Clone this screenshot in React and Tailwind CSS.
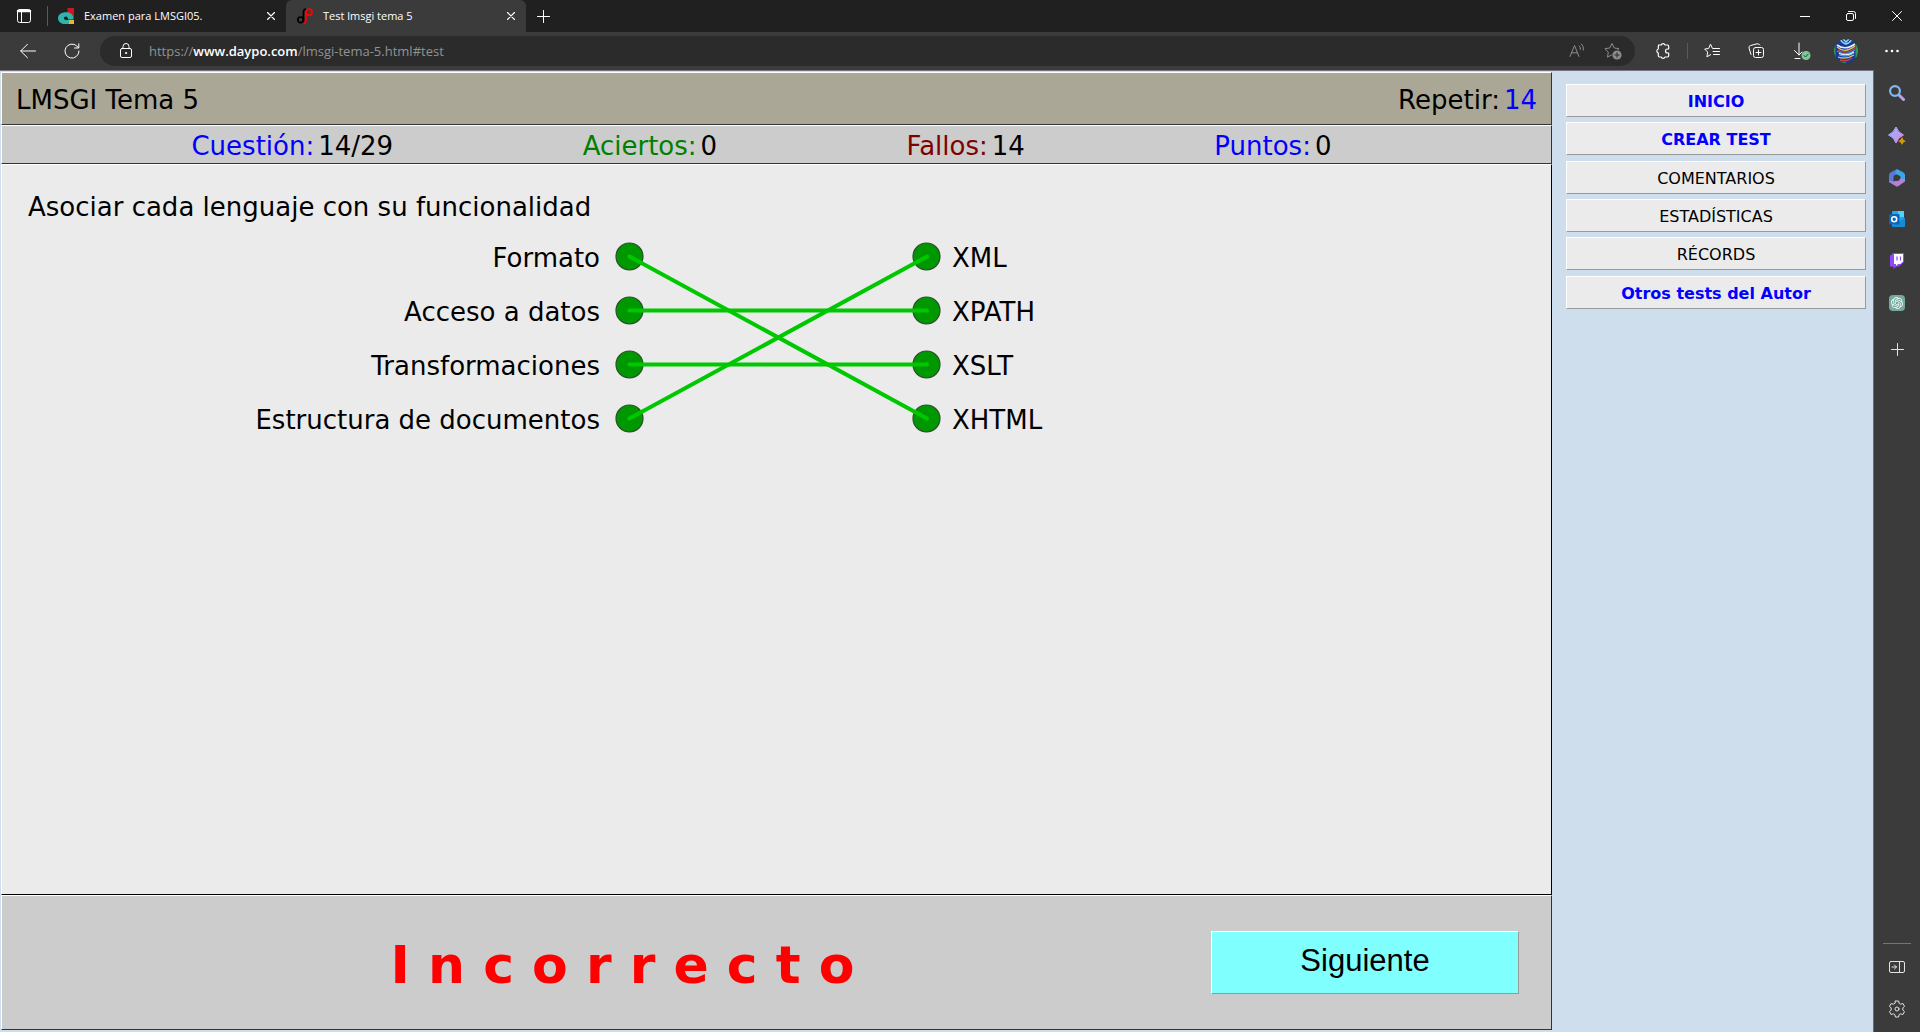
import { SiOpenai } from "react-icons/si";

const stroke = {
  fill: "none",
  stroke: "currentColor",
  strokeLinecap: "round",
  strokeLinejoin: "round",
};

function Icon({ children, className = "size-4", box = 16, ...rest }) {
  return (
    <svg className={className} viewBox={`0 0 ${box} ${box}`} aria-hidden="true" {...stroke} {...rest}>
      {children}
    </svg>
  );
}

function CloseMark() {
  return (
    <Icon className="size-2" box={8} strokeWidth="1.2">
      <path d="M0.5 0.5l7 7M7.5 0.5l-7 7" />
    </Icon>
  );
}

function TabStrip() {
  return (
    <header className="flex h-8 items-center bg-[#202020] text-white">
      <button aria-label="Menú de pestañas" className="flex h-5 w-12 items-center justify-center border-r border-[#5a5a5a]">
        <Icon>
          <rect x="1.5" y="1.5" width="13" height="13" rx="2" />
          <path d="M2 3h12" strokeWidth="2.5" />
          <path d="M5.5 4v10" />
        </Icon>
      </button>
      <div className="flex w-[238px] items-center gap-2.5 pl-2.5 pr-[11px]">
        <svg className="size-4 shrink-0" viewBox="0 0 16 16" aria-hidden="true">
          <path d="M9.500 0H16V10H13V6H9.500z" fill="#c8191e" />
          <path d="M11 12h5v4h-5z" fill="#f3b229" />
          <path d="M10.500 4.500C4 3.500 0 6.500 0 10.200 0 14 3.500 16 7 16h4v-4H8c-2.500 0-3-3.500 0-3.500 1.500 0 2 1.500 2 3h5.500C15.500 7.500 13.500 5 10.500 4.500z" fill="#30b3ad" />
        </svg>
        <span className="grow text-[11px]">Examen para LMSGI05.</span>
        <button aria-label="Cerrar pestaña"><CloseMark /></button>
      </div>
      <div className="flex h-8 w-60 items-center gap-2.5 rounded-t-md bg-[#3b3b3b] pl-[11px] pr-[11px]">
        <svg className="size-4 shrink-0" viewBox="0 0 16 16" fill="none" aria-hidden="true">
          <circle cx="3.600" cy="11.800" r="2.800" stroke="#000" strokeWidth="1.700" />
          <path d="M6.500 14.500V4.500Q6.500 1 9 1" stroke="#000" strokeWidth="1.700" />
          <circle cx="12" cy="4.200" r="3" stroke="#f00" strokeWidth="1.800" />
          <path d="M8.900 3.500V11.500Q8.900 15 6.500 15.200" stroke="#f00" strokeWidth="1.900" />
        </svg>
        <span className="grow text-[11px]">Test lmsgi tema 5</span>
        <button aria-label="Cerrar pestaña"><CloseMark /></button>
      </div>
      <button aria-label="Nueva pestaña" className="flex w-[34px] justify-center">
        <Icon className="size-[13px]" box={13}><path d="M6.500 0.500v12M0.500 6.500h12" /></Icon>
      </button>
      <div className="ml-auto flex">
        <button aria-label="Minimizar" className="flex w-[46px] items-center justify-center">
          <Icon className="size-2.5" box={10}><path d="M0 5.500h10" /></Icon>
        </button>
        <button aria-label="Restaurar" className="flex w-[46px] items-center justify-center">
          <Icon className="size-2.5" box={10}>
            <rect x="0.500" y="2.500" width="7" height="7" rx="1.500" />
            <path d="M2.500 0.500H7.500Q9.500 0.500 9.500 2.500V7.500" />
          </Icon>
        </button>
        <button aria-label="Cerrar" className="flex w-[46px] items-center justify-center">
          <Icon className="size-2.5" box={10}><path d="M0.500 0.500l9 9M9.500 0.500l-9 9" /></Icon>
        </button>
      </div>
    </header>
  );
}

function Toolbar() {
  return (
    <nav className="flex h-[38px] items-center bg-[#3b3b3b] pr-1.5 text-white">
      <button aria-label="Atrás" className="ml-1.5 flex w-11 justify-center">
        <Icon><path d="M15.500 8H0.800M7.500 1.200L0.700 8l6.800 6.800" /></Icon>
      </button>
      <button aria-label="Actualizar" className="flex w-11 justify-center">
        <Icon><path d="M15 8A7 7 0 1 1 12.800 3L14.500 4.700M14.800 0.800V5H10.500" /></Icon>
      </button>
      <div className="ml-1.5 flex h-[30px] grow items-center rounded-full bg-[#2b2b2b] pl-[18px] pr-1">
        <button aria-label="Información del sitio">
          <Icon>
            <rect x="2.500" y="5.500" width="11" height="9" rx="1.500" />
            <path d="M5 5.500V3.500a3 3 0 0 1 6 0v2" />
            <circle cx="8" cy="10" r="0.600" fill="currentColor" />
          </Icon>
        </button>
        <a href="https://www.daypo.com/lmsgi-tema-5.html#test" className="ml-[15px] grow pt-0.5 text-[13px] text-[#929292]">
          https://<span className="font-semibold text-white">www.daypo.com</span>/lmsgi-tema-5.html#test
        </a>
        <button aria-label="Leer en voz alta" className="flex w-9 justify-center text-[#8c8c8c]">
          <Icon>
            <path d="M1 13.500L5.500 2.500 10 13.500M2.600 9.800h5.800M10.500 3q1.200 1.500 0.900 3.500M12.500 1q2.500 2.500 2 6" />
          </Icon>
        </button>
        <button aria-label="Agregar a favoritos" className="flex w-9 justify-center text-[#8c8c8c]">
          <Icon className="size-[18px]" box={18}>
            <path d="M7.500 13l-4 2.200 0.800-5L1 6.700l4.700-0.700L8 1.500 10.300 6l4.700 0.700-1.200 1" />
            <circle cx="13" cy="13" r="4.600" fill="currentColor" stroke="none" />
            <path d="M13 10.800v4.400M10.800 13h4.400" stroke="#2b2b2b" />
          </Icon>
        </button>
      </div>
      <button aria-label="Extensiones" className="ml-1.5 flex w-11 justify-center">
        <Icon strokeWidth="1.2">
          <path d="M3.500 2H6.200A2 2 0 0 1 10 2H12.500Q13.700 2 13.700 3.200V6H12.500A2 2 0 0 0 12.500 10H13.700V12.800Q13.700 14 12.500 14H10A2 2 0 0 1 6.200 14H4.500Q3.300 14 3.300 12.800V10A2.100 2.100 0 0 1 3.300 6V3.200Q3.300 2 4.500 2z" />
        </Icon>
      </button>
      <div className="ml-0.5 mr-0.5 h-4 border-l border-[#5a5a5a]" />
      <button aria-label="Favoritos" className="flex w-11 justify-center">
        <Icon>
          <path d="M9.500 5.600L8.500 5.500 6.500 1.200 4.600 5.500 0.700 6l3 3.100-0.800 4.700 3.800-2.200" />
          <path d="M9.500 5.500h6M9 8.500h6.500M9.500 11.500h6" />
        </Icon>
      </button>
      <button aria-label="Colecciones" className="flex w-11 justify-center">
        <Icon>
          <rect x="5.500" y="4.500" width="10" height="10" rx="2" />
          <path d="M10.500 7v5M8 9.500h5M3 11.500L1 5Q0.500 3 2.500 2.500L9 0.800Q11 0.500 11.800 2" />
        </Icon>
      </button>
      <button aria-label="Descargas" className="ml-0.5 flex w-11 justify-center">
        <Icon className="size-[18px]" box={18}>
          <path d="M6 1v12M1.500 8.500L6 13l3-3M2 16.500h5" />
          <circle cx="13" cy="13.500" r="4.500" fill="#7cc897" stroke="none" />
          <path d="M11 13.500l1.500 1.500 2.700-3" stroke="#2b4a36" />
        </Icon>
      </button>
      <button aria-label="Perfil" className="flex w-11 justify-center">
        <svg className="size-6" viewBox="0 0 24 24" fill="none" aria-hidden="true">
          <defs>
            <clipPath id="avatar"><circle cx="12" cy="12" r="12" /></clipPath>
          </defs>
          <g clipPath="url(#avatar)">
            <path d="M0 0h24v24H0z" fill="#173a94" />
            <path d="M0 6v14q5 6 12 4M23 6v13" stroke="#2ea052" strokeWidth="3" />
            <path d="M6 0q2 4 6 5 4-1 6-5M9 0l3 3 3-3" stroke="#8fd6ef" strokeWidth="1.500" />
            <path d="M3 6q8 6 18-1M5 14q8 4 15-1" stroke="#e8ecff" strokeWidth="1.600" />
            <path d="M3 8q8 7 18-1M4 18q8 3 16-2" stroke="#e9c843" strokeWidth="1.200" />
            <path d="M4 11q8 5 17-2M6 21q7 2 12-2" stroke="#d03a52" strokeWidth="1.400" />
            <path d="M3 12q8 6 18-1M5 16q8 3 15-2" stroke="#38b7e8" strokeWidth="1" />
          </g>
        </svg>
      </button>
      <button aria-label="Configuración y más" className="ml-0.5 flex w-11 justify-center">
        <Icon fill="currentColor" stroke="none">
          <circle cx="2.500" cy="8" r="1.300" /><circle cx="8" cy="8" r="1.300" /><circle cx="13.500" cy="8" r="1.300" />
        </Icon>
      </button>
    </nav>
  );
}

const STATS = [
  { label: "Cuestión:", value: "14/29", tone: "text-[#0000ff]" },
  { label: "Aciertos:", value: "0", tone: "text-[#008000]" },
  { label: "Fallos:", value: "14", tone: "text-[#800000]" },
  { label: "Puntos:", value: "0", tone: "text-[#0000ff]" },
];

const LEFT = ["Formato", "Acceso a datos", "Transformaciones", "Estructura de documentos"];
const RIGHT = ["XML", "XPATH", "XSLT", "XHTML"];
const LINKS = [[0, 3], [1, 1], [2, 2], [3, 0]];
const dotY = (row) => 25.5 + row * 54;

function Matching() {
  return (
    <div className="mt-[5px] flex">
      <ul className="w-[598px] text-right">
        {LEFT.map((t) => <li key={t} className="h-[54px] leading-[54px]">{t}</li>)}
      </ul>
      <svg className="ml-3 h-[216px] w-[332px] shrink-0" viewBox="0 0 332 216" aria-hidden="true">
        {[17, 314].map((x) =>
          RIGHT.map((t, i) => (
            <circle key={x + t} cx={x + 0.5} cy={dotY(i)} r="13.500" fill="#009800" stroke="#2b502b" strokeWidth="1.200" />
          ))
        )}
        {LINKS.map(([a, b]) => (
          <line key={a} x1="17.500" y1={dotY(a)} x2="315" y2={dotY(b)} stroke="#00c800" strokeWidth="4" strokeLinecap="round" />
        ))}
      </svg>
      <ul className="ml-2">
        {RIGHT.map((t) => <li key={t} className="h-[54px] leading-[54px]">{t}</li>)}
      </ul>
    </div>
  );
}

function Quiz() {
  return (
    <main className="mb-0.5 ml-px mt-px flex grow flex-col text-[26px] text-black">
      <div className="flex h-[53px] items-center justify-between border border-b-[#333] border-l-white border-r-[#333] border-t-white bg-[#aba796] px-3.5 pt-1">
        <h1>LMSGI Tema 5</h1>
        <p className="flex gap-1">Repetir:<span className="text-[#0000ff]">14</span></p>
      </div>
      <dl className="flex h-[39px] items-center justify-evenly border border-b-[#333] border-l-white border-r-[#333] border-t-white bg-[#ccc] pr-[30px] pt-1">
        {STATS.map((s) => (
          <div key={s.label} className="flex gap-1">
            <dt className={s.tone}>{s.label}</dt>
            <dd>{s.value}</dd>
          </div>
        ))}
      </dl>
      <section className="grow border border-b-black border-l-white border-r-black border-t-white bg-[#ebebeb] pt-[23px]">
        <h2 className="pl-[26px] leading-[38px]">Asociar cada lenguaje con su funcionalidad</h2>
        <Matching />
      </section>
      <footer className="flex h-[135px] items-center border border-b-[#333] border-l-white border-r-[#333] border-t-white bg-[#ccc] pr-8">
        <p className="grow pl-8 pt-1 text-center text-[52px] font-bold text-[#ff0000]">I n c o r r e c t o</p>
        <button className="h-[63px] w-[308px] border border-b-[#999] border-l-white border-r-[#999] border-t-white bg-[#80ffff] pb-0.5 font-['Liberation_Sans',sans-serif] text-[31px]">
          Siguiente
        </button>
      </footer>
    </main>
  );
}

const MENU = [
  [["INICIO", true], ["CREAR TEST", true]],
  [["COMENTARIOS", false], ["ESTADÍSTICAS", false], ["RÉCORDS", false]],
  [["Otros tests del Autor", true]],
];

function Menu() {
  return (
    <aside className="flex w-[321px] shrink-0 flex-col gap-1.5 pl-3.5 pr-[7px] pt-[13px]">
      {MENU.map((group, i) => (
        <div key={i} className="flex flex-col gap-[5px]">
          {group.map(([label, strong]) => (
            <button
              key={label}
              className={
                "h-[33px] border border-b-[#999] border-l-white border-r-[#999] border-t-white bg-[#ebebeb] pt-0.5 " +
                (strong ? "font-bold text-[#0000ff]" : "text-black")
              }
            >
              {label}
            </button>
          ))}
        </div>
      ))}
    </aside>
  );
}

function SideBar() {
  return (
    <aside className="flex w-[47px] shrink-0 flex-col items-center border-l border-[#6b6b6b] bg-[#3b3b3b] pt-[15px] text-[#e4e4e4]">
      <button aria-label="Buscar" className="flex h-[42px] w-full justify-center">
        <svg className="size-4" viewBox="0 0 16 16" fill="none" aria-hidden="true">
          <path d="M10.500 10.500l4 4" stroke="#b9a2ea" strokeWidth="3" strokeLinecap="round" />
          <circle cx="6" cy="6" r="4.900" stroke="#7fb9f2" strokeWidth="2.200" />
        </svg>
      </button>
      <button aria-label="Descubrir" className="flex h-[42px] w-full justify-center">
        <svg className="size-[18px]" viewBox="0 0 18 18" aria-hidden="true">
          <defs>
            <linearGradient id="spark" x1="0" x2="1" y1="0.200" y2="0.800">
              <stop stopColor="#8db4ff" /><stop offset="1" stopColor="#e08ae4" />
            </linearGradient>
          </defs>
          <path d="M8 0q2 5.500 7.500 8Q10 10 8 16 6 10 0.500 8 6 5.500 8 0z" fill="url(#spark)" stroke="url(#spark)" strokeLinejoin="round" />
          <path d="M14 10q0.800 3.200 4 4-3.200 0.800-4 4-0.800-3.200-4-4 3.200-0.800 4-4z" fill="#d99a00" />
        </svg>
      </button>
      <button aria-label="Microsoft 365" className="flex h-[42px] w-full justify-center">
        <svg className="size-[18px]" viewBox="0 0 18 18" aria-hidden="true">
          <path d="M9 0L2.500 3.500Q1 4.500 1 6v6.500l4.500 1V7L11 3.500z" fill="#5a78dc" />
          <path d="M9 0l6.500 3.500Q17 4.500 17 6v6l-4.500-1V7.500L7 4.500z" fill="#37a7e6" />
          <path d="M17 10v2.500L10.500 17Q9 18 7.500 17L1 13v-1l5 0.500 6.500-3z" fill="#b280d4" />
          <circle cx="9" cy="9" r="3" fill="#3b3b3b" />
        </svg>
      </button>
      <button aria-label="Outlook" className="flex h-[42px] w-full justify-center">
        <svg className="size-4" viewBox="0 0 16 16" fill="none" aria-hidden="true">
          <rect x="3" width="12" height="15" rx="1" fill="#2aa5ea" />
          <path d="M9 0h6v6H9z" fill="#50d0fa" />
          <path d="M3 15.500l13-9V15q0 1-1 1H3z" fill="#168bd8" />
          <rect y="3" width="10.500" height="10.500" rx="1" fill="#0a64b8" />
          <circle cx="5.200" cy="8.200" r="2.500" stroke="#fff" strokeWidth="1.600" />
        </svg>
      </button>
      <button aria-label="Twitch" className="flex h-[42px] w-full justify-center">
        <svg className="size-4" viewBox="0 0 16 16" aria-hidden="true">
          <path d="M4 0L1 3v10.500h3.500V16L7.500 13.500H10L15 9V0z" fill="#9146ff" />
          <path d="M5 1h9v7.500L11.500 11H9l-2 2v-2H5z" fill="#fff" />
          <path d="M8 3.500v4M11.500 3.500v4" stroke="#9146ff" strokeWidth="1.200" />
        </svg>
      </button>
      <button aria-label="ChatGPT" className="flex h-[42px] w-full justify-center">
        <span className="flex size-4 items-center justify-center rounded-sm bg-[#74aa9c] text-white">
          <SiOpenai className="size-3" />
        </span>
      </button>
      <button aria-label="Personalizar" className="mt-1.5 flex h-[42px] w-full justify-center">
        <Icon className="size-[13px]" box={13}><path d="M6.500 0.500v12M0.500 6.500h12" /></Icon>
      </button>
      <div className="mt-auto w-7 border-t border-[#757575]" />
      <button aria-label="Ocultar barra lateral" className="mt-[15px] flex w-full justify-center">
        <Icon>
          <rect x="0.500" y="2.500" width="15" height="11" rx="1.500" />
          <path d="M10.500 3v10M3 8h4.500M5.500 6l2 2-2 2" />
        </Icon>
      </button>
      <button aria-label="Configuración" className="mb-3.5 mt-[25px] flex w-full justify-center">
        <Icon className="size-[18px]" box={18}>
          <path d="M7.400 1h3.200l0.500 2.300 1.500 0.900 2.300-0.700 1.600 2.800-1.700 1.700v2l1.700 1.700-1.600 2.800-2.300-0.700-1.500 0.900-0.500 2.300H7.400l-0.500-2.300-1.500-0.900-2.300 0.700-1.600-2.800L3.200 10V8L1.500 6.300l1.600-2.800 2.300 0.700 1.500-0.900z" />
          <circle cx="9" cy="9" r="2" />
        </Icon>
      </button>
    </aside>
  );
}

export default function App() {
  return (
    <div className="flex min-h-screen flex-col font-['Open_Sans',sans-serif]">
      <TabStrip />
      <Toolbar />
      <div className="flex grow">
        <div className="flex grow border-t border-[#78747f] bg-[#cfdeed] font-[Verdana,'DejaVu_Sans',sans-serif]">
          <Quiz />
          <Menu />
        </div>
        <SideBar />
      </div>
    </div>
  );
}
